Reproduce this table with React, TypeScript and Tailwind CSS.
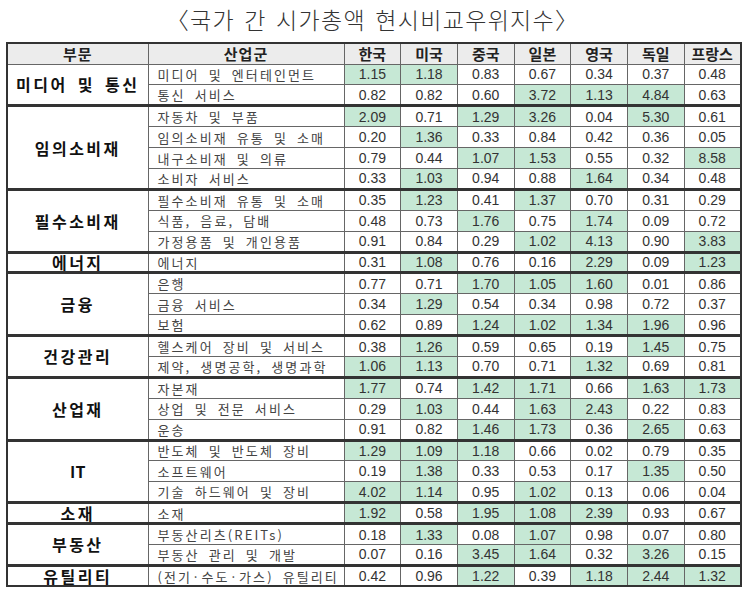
const countries = ["한국", "미국", "중국", "일본", "영국", "독일", "프랑스"];

type Row = [string, number[]];
const groups: { name: string; rows: Row[] }[] = [
  {
    name: "미디어 및 통신",
    rows: [
      ["미디어 및 엔터테인먼트", [1.15, 1.18, 0.83, 0.67, 0.34, 0.37, 0.48]],
      ["통신 서비스", [0.82, 0.82, 0.6, 3.72, 1.13, 4.84, 0.63]],
    ],
  },
  {
    name: "임의소비재",
    rows: [
      ["자동차 및 부품", [2.09, 0.71, 1.29, 3.26, 0.04, 5.3, 0.61]],
      ["임의소비재 유통 및 소매", [0.2, 1.36, 0.33, 0.84, 0.42, 0.36, 0.05]],
      ["내구소비재 및 의류", [0.79, 0.44, 1.07, 1.53, 0.55, 0.32, 8.58]],
      ["소비자 서비스", [0.33, 1.03, 0.94, 0.88, 1.64, 0.34, 0.48]],
    ],
  },
  {
    name: "필수소비재",
    rows: [
      ["필수소비재 유통 및 소매", [0.35, 1.23, 0.41, 1.37, 0.7, 0.31, 0.29]],
      ["식품, 음료, 담배", [0.48, 0.73, 1.76, 0.75, 1.74, 0.09, 0.72]],
      ["가정용품 및 개인용품", [0.91, 0.84, 0.29, 1.02, 4.13, 0.9, 3.83]],
    ],
  },
  {
    name: "에너지",
    rows: [["에너지", [0.31, 1.08, 0.76, 0.16, 2.29, 0.09, 1.23]]],
  },
  {
    name: "금융",
    rows: [
      ["은행", [0.77, 0.71, 1.7, 1.05, 1.6, 0.01, 0.86]],
      ["금융 서비스", [0.34, 1.29, 0.54, 0.34, 0.98, 0.72, 0.37]],
      ["보험", [0.62, 0.89, 1.24, 1.02, 1.34, 1.96, 0.96]],
    ],
  },
  {
    name: "건강관리",
    rows: [
      ["헬스케어 장비 및 서비스", [0.38, 1.26, 0.59, 0.65, 0.19, 1.45, 0.75]],
      ["제약, 생명공학, 생명과학", [1.06, 1.13, 0.7, 0.71, 1.32, 0.69, 0.81]],
    ],
  },
  {
    name: "산업재",
    rows: [
      ["자본재", [1.77, 0.74, 1.42, 1.71, 0.66, 1.63, 1.73]],
      ["상업 및 전문 서비스", [0.29, 1.03, 0.44, 1.63, 2.43, 0.22, 0.83]],
      ["운송", [0.91, 0.82, 1.46, 1.73, 0.36, 2.65, 0.63]],
    ],
  },
  {
    name: "IT",
    rows: [
      ["반도체 및 반도체 장비", [1.29, 1.09, 1.18, 0.66, 0.02, 0.79, 0.35]],
      ["소프트웨어", [0.19, 1.38, 0.33, 0.53, 0.17, 1.35, 0.5]],
      ["기술 하드웨어 및 장비", [4.02, 1.14, 0.95, 1.02, 0.13, 0.06, 0.04]],
    ],
  },
  {
    name: "소재",
    rows: [["소재", [1.92, 0.58, 1.95, 1.08, 2.39, 0.93, 0.67]]],
  },
  {
    name: "부동산",
    rows: [
      ["부동산리츠(REITs)", [0.18, 1.33, 0.08, 1.07, 0.98, 0.07, 0.8]],
      ["부동산 관리 및 개발", [0.07, 0.16, 3.45, 1.64, 0.32, 3.26, 0.15]],
    ],
  },
  {
    name: "유틸리티",
    rows: [["(전기·수도·가스) 유틸리티", [0.42, 0.96, 1.22, 0.39, 1.18, 2.44, 1.32]]],
  },
];

const kr = "font-['Noto_Sans_CJK_KR','Noto_Sans',sans-serif]";

const App = () => {
  return (
    <div className={`w-[745px] h-[592px] bg-white ${kr} text-[#222]`}>
      <div className="h-[42px] flex items-start justify-center pt-[3px]">
        <h1 className="text-[23px] leading-[32px] font-light text-[#333] tracking-[1.3px] [word-spacing:3px]">
          〈국가 간 시가총액 현시비교우위지수〉
        </h1>
      </div>

      <table className="ml-[6px] w-[734px] table-fixed border-collapse border-2 border-[#333]">
        <colgroup>
          <col className="w-[141px]" />
          <col className="w-[196px]" />
          {countries.map((c) => (
            <col key={c} className="w-[56.7px]" />
          ))}
        </colgroup>
        <thead>
          <tr className="h-[21px] bg-[#ececec]">
            <th className="border border-[#666] text-[15px] font-bold leading-none tracking-[1px]">부문</th>
            <th className="border border-[#666] text-[15px] font-bold leading-none tracking-[1px]">산업군</th>
            {countries.map((c) => (
              <th key={c} className="border border-[#666] text-[15px] font-bold leading-none">
                {c}
              </th>
            ))}
          </tr>
        </thead>
        <tbody>
          {groups.map((g, gi) =>
            g.rows.map(([label, vals], ri) => {
              const top = ri === 0 && gi > 0 ? "border-t-[3px] border-t-[#333]" : "";
              return (
                <tr key={g.name + label} className="h-[20.9px]">
                  {ri === 0 && (
                    <td
                      rowSpan={g.rows.length}
                      className={`border border-[#666] ${top} text-center text-[16px] font-bold ${
                        g.name === "IT" ? "tracking-normal" : "tracking-[2.5px]"
                      } [word-spacing:4px] leading-none text-[#111]`}
                    >
                      {g.name}
                    </td>
                  )}
                  <td className={`border border-[#666] ${top} pl-[9px] text-[13px] tracking-[2.1px] [word-spacing:4px] leading-none text-[#444] whitespace-nowrap`}>
                    {label}
                  </td>
                  {vals.map((v, i) => (
                    <td
                      key={i}
                      className={`border border-[#666] ${top} text-center font-['Liberation_Sans',Arial,sans-serif] text-[14px] leading-none text-[#333] ${
                        v >= 1 ? "bg-[#c6e8d5]" : ""
                      }`}
                    >
                      {v.toFixed(2)}
                    </td>
                  ))}
                </tr>
              );
            })
          )}
        </tbody>
      </table>
    </div>
  );
};

export default App;
